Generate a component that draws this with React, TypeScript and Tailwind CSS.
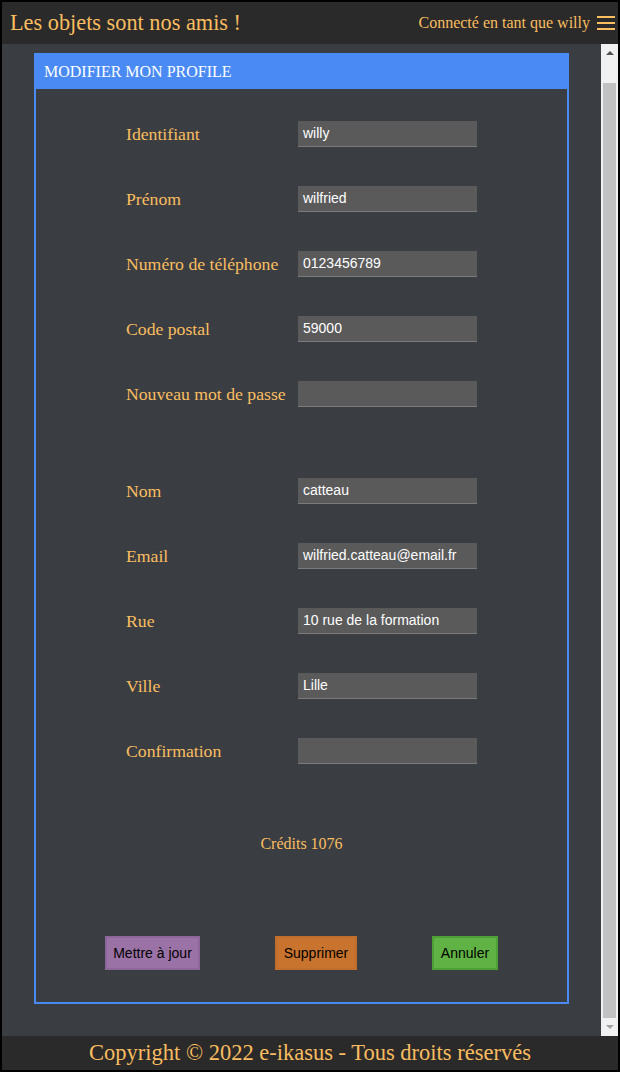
import React from "react";

const serif = { fontFamily: '"Liberation Serif", "Times New Roman", serif' };
const sans = { fontFamily: '"Liberation Sans", Arial, sans-serif' };

function Row({ label, value }: { label: string; value: string }) {
  return (
    <div className="flex items-center h-[26px]">
      <div className="w-[172px] text-[17.7px] text-[#fabd5f] pt-[1px]" style={serif}>
        {label}
      </div>
      <div
        className="w-[179px] h-[26px] bg-[#5a5a5b] border-b border-[#7a7a7a] text-white text-[14px] pl-[5px] flex items-center"
        style={sans}
      >
        {value}
      </div>
    </div>
  );
}

export default function App() {
  const first = [
    ["Identifiant", "willy"],
    ["Prénom", "wilfried"],
    ["Numéro de téléphone", "0123456789"],
    ["Code postal", "59000"],
    ["Nouveau mot de passe", ""],
  ];
  const second = [
    ["Nom", "catteau"],
    ["Email", "wilfried.catteau@email.fr"],
    ["Rue", "10 rue de la formation"],
    ["Ville", "Lille"],
    ["Confirmation", ""],
  ];
  return (
    <div className="w-[620px] h-[1072px] bg-black p-[2px] flex flex-col overflow-hidden">
      <header className="h-[42px] bg-[#2a2a2a] flex items-center justify-between pl-[8px] pr-[3px] shrink-0">
        <div className="text-[22.3px] text-[#fabd5f] leading-none" style={serif}>
          Les objets sont nos amis !
        </div>
        <div className="flex items-center gap-[7px]">
          <span className="text-[16px] text-[#fabd5f]" style={serif}>
            Connecté en tant que willy
          </span>
          <div className="flex flex-col gap-[4px] w-[18px]">
            <div className="h-[2px] bg-[#fabd5f]" />
            <div className="h-[2px] bg-[#fabd5f]" />
            <div className="h-[2px] bg-[#fabd5f]" />
          </div>
        </div>
      </header>
      <div className="flex flex-1 min-h-0">
        <main className="flex-1 bg-[#3a3e42] pt-[9px] px-[32px]">
          <div className="border-2 border-[#4a8af4] h-[951px] flex flex-col">
            <div className="h-[34px] bg-[#4a8af4] flex items-center pl-[8px] text-white text-[16px]" style={serif}>
              MODIFIER MON PROFILE
            </div>
            <div className="flex flex-col items-center pt-[32px]">
              <div className="flex flex-col gap-[39px]">
                {first.map(([l, v]) => (
                  <Row key={l} label={l} value={v} />
                ))}
              </div>
              <div className="flex flex-col gap-[39px] mt-[71px]">
                {second.map(([l, v]) => (
                  <Row key={l} label={l} value={v} />
                ))}
              </div>
              <div className="mt-[71px] text-[16px] text-[#fabd5f] h-[18px] leading-[18px]" style={serif}>
                Crédits 1076
              </div>
              <div className="mt-[83px] flex gap-[75px] text-[14px] text-black" style={sans}>
                <div className="w-[95px] h-[34px] bg-[#9b72a6] border-2 border-[#8d679a] flex items-center justify-center">
                  Mettre à jour
                </div>
                <div className="w-[82px] h-[34px] bg-[#c8742e] border-2 border-[#c06e2b] flex items-center justify-center">
                  Supprimer
                </div>
                <div className="w-[66px] h-[34px] bg-[#60b245] border-2 border-[#4f9f37] flex items-center justify-center">
                  Annuler
                </div>
              </div>
            </div>
          </div>
        </main>
        <div className="w-[17px] bg-[#f1f1f1] flex flex-col items-center shrink-0">
          <div className="h-[17px] flex items-center justify-center">
            <div className="w-0 h-0 border-l-[4px] border-r-[4px] border-b-[4px] border-l-transparent border-r-transparent border-b-[#505050]" />
          </div>
          <div className="mt-[22px] w-[13px] h-[935px] bg-[#c1c1c1]" />
          <div className="flex-1 flex items-center justify-center">
            <div className="w-0 h-0 border-l-[4px] border-r-[4px] border-t-[4px] border-l-transparent border-r-transparent border-t-[#a3a3a3]" />
          </div>
        </div>
      </div>
      <footer className="h-[34px] bg-[#2a2a2a] flex items-center justify-center shrink-0">
        <span className="text-[22.5px] text-[#fabd5f]" style={serif}>
          Copyright © 2022 e-ikasus - Tous droits réservés
        </span>
      </footer>
    </div>
  );
}
